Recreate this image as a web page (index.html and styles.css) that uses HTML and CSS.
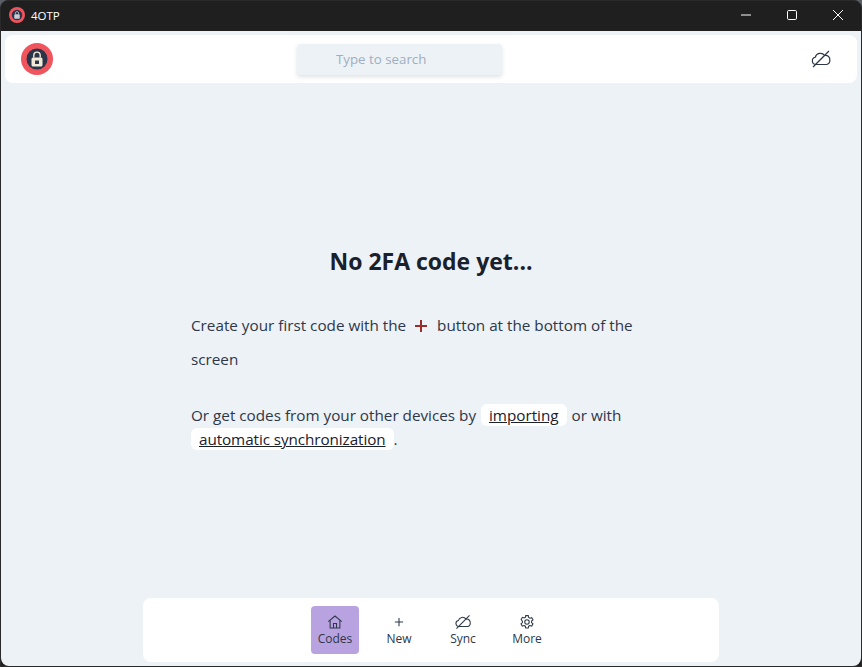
FILE: index.html
```html
<!DOCTYPE html>
<html lang="en">
<head>
  <meta charset="UTF-8" />
  <title>4OTP</title>
  <link rel="stylesheet" href="styles.css">
</head>
<body>
  <div class="window">
    <div class="titlebar">
      <svg class="title-logo" viewBox="0 0 32 32">
        <circle cx="16" cy="16" r="16" fill="#f0545c"/>
        <circle cx="16" cy="16" r="10.500" fill="#2b3448"/>
        <rect x="10.500" y="14.500" width="11" height="9" rx="1.500" fill="#c9cdd6"/>
        <path d="M12.800 14.500v-2.200a3.200 3.200 0 0 1 6.400 0v2.200" fill="none" stroke="#c9cdd6" stroke-width="1.500"/>
      </svg>
      <span class="title-text">4OTP</span>
      <div class="window-buttons">
        <svg viewBox="0 0 12 12"><path d="M1 6h10" /></svg>
        <svg viewBox="0 0 12 12"><rect x="1.500" y="1.500" width="9" height="9" rx="1.200"/></svg>
        <svg viewBox="0 0 12 12"><path d="M1 1l10 10M11 1L1 11"/></svg>
      </div>
    </div>

    <div class="page">
      <div class="header">
        <svg class="logo" viewBox="0 0 32 32">
          <circle cx="16" cy="16" r="16" fill="#f0545c"/>
          <circle cx="16" cy="16" r="10.500" fill="#2b3448"/>
          <rect x="10.500" y="14.500" width="11" height="9" rx="1.500" fill="#f2ead8"/>
          <rect x="14" y="17.500" width="4" height="3.500" fill="#2b3448"/>
          <path d="M12.800 14.500v-2.200a3.200 3.200 0 0 1 6.400 0v2.200" fill="none" stroke="#f2ead8" stroke-width="1.400"/>
        </svg>
        <input class="search" type="text" placeholder="Type to search" />
        <svg class="sync-icon" viewBox="0 0 24 24">
          <path d="M6.500 18a4 4 0 0 1-.8-7.900A5.800 5.800 0 0 1 16 8.200a4.600 4.600 0 0 1 5.600 5.300A4 4 0 0 1 18 18z"/>
          <path d="M20.700 3.300L3.300 20.700"/>
        </svg>
      </div>

      <div class="main-content">
        <h1>No 2FA code yet...</h1>
        <div class="message">
          <p class="first-line">Create your first code with the <svg class="plus" viewBox="0 0 12 12"><path d="M6 0v12M0 6h12"/></svg> button at the bottom of the screen</p>
          <p class="second-line">Or get codes from your other devices by <a href="#">importing</a> or with <a class="tight" href="#">automatic synchronization</a> .</p>
        </div>
      </div>

      <div class="nav">
        <div class="nav-item active">
          <svg viewBox="0 0 24 24"><path d="M3 11.500L12 4l9 7.500"/><path d="M5.500 9.500V20h13V9.500"/><path d="M10 20v-6h4v6"/></svg>
          <span>Codes</span>
        </div>
        <div class="nav-item">
          <svg viewBox="0 0 24 24"><path d="M12 6.500v11M6.500 12h11"/></svg>
          <span>New</span>
        </div>
        <div class="nav-item">
          <svg viewBox="0 0 24 24">
            <path d="M6.500 18a4 4 0 0 1-.8-7.900A5.800 5.800 0 0 1 16 8.200a4.600 4.600 0 0 1 5.600 5.300A4 4 0 0 1 18 18z"/>
            <path d="M20.700 3.300L3.300 20.700"/>
          </svg>
          <span>Sync</span>
        </div>
        <div class="nav-item">
          <svg viewBox="0 0 24 24">
            <path d="M10.300 3.500h3.400l.5 2.500 1.700 1 2.400-.8 1.700 2.900-1.900 1.700v2l1.900 1.700-1.700 2.900-2.400-.8-1.700 1-.5 2.500h-3.400l-.5-2.500-1.700-1-2.400.8-1.700-2.900 1.900-1.700v-2L4.200 8.600l1.700-2.900 2.400.8 1.700-1z"/>
            <circle cx="12" cy="12" r="3"/>
          </svg>
          <span>More</span>
        </div>
      </div>
    </div>
  </div>
</body>
</html>
```

FILE: styles.css
```css
* {
  box-sizing: border-box;
  margin: 0;
  padding: 0;
}

html,
body {
  height: 100%;
}

body {
  font-family: "Open Sans", "Noto Sans", sans-serif;
  background-color: #5a5f66;
  overflow: hidden;
}

.window {
  display: flex;
  flex-direction: column;
  height: 667px;
  background-color: #1f1f1f;
  border: 1px solid #2a2a2a;
  border-radius: 8px 8px 0 0;
  overflow: hidden;
}

.titlebar {
  display: flex;
  align-items: center;
  height: 30px;
  padding-left: 8px;
  padding-bottom: 2px;
  color: white;
  flex-shrink: 0;
}

.title-logo {
  width: 16px;
  height: 16px;
  margin-right: 6px;
}

.title-text {
  font-size: 11.500px;
}

.window-buttons {
  display: flex;
  margin-left: auto;
}

.window-buttons svg {
  width: 46px;
  height: 12px;
  fill: none;
  stroke: white;
  stroke-width: 1;
}

.page {
  flex: 1;
  display: flex;
  flex-direction: column;
  background-color: #edf2f7;
  padding: 4px;
  border-radius: 0 0 8px 8px;
  min-height: 0;
}

.header {
  display: flex;
  align-items: center;
  height: 48px;
  padding-left: 16px;
  padding-right: 25px;
  background-color: white;
  border-radius: 8px;
  flex-shrink: 0;
}

.logo {
  width: 32px;
  height: 32px;
}

.search {
  width: 205px;
  height: 31px;
  margin-left: 244px;
  padding-left: 39px;
  font-family: inherit;
  font-size: 13.300px;
  color: #2d3748;
  background-color: #edf2f7;
  border: none;
  border-radius: 4px;
  box-shadow: 0 2px 4px rgba(45, 55, 72, 0.15);
}

.search::placeholder {
  color: #a0aec0;
  opacity: 1;
}

.sync-icon {
  width: 22px;
  height: 22px;
  margin-left: auto;
  fill: none;
  stroke: #2d3748;
  stroke-width: 1.300;
}

.main-content {
  flex: 1;
  display: flex;
  flex-direction: column;
  align-items: center;
  padding-top: 162px;
  min-height: 0;
}

h1 {
  font-size: 23px;
  font-weight: 700;
  line-height: 32px;
  color: #1a202c;
}

.message {
  width: 480px;
  margin-top: 31px;
  font-size: 15.250px;
  color: #2d3748;
}

.first-line {
  line-height: 34px;
}

.plus {
  width: 12px;
  height: 12px;
  margin: 0 6px 0 5px;
  vertical-align: -1px;
  fill: none;
  stroke: #9b2c2c;
  stroke-width: 2;
}

.second-line {
  margin-top: 27px;
  line-height: 24px;
}

.second-line a {
  padding: 1px 8px;
  margin: 0 1px;
  color: #1a202c;
  background-color: white;
  border-radius: 6px;
}

.second-line a.tight {
  margin: 0 -4px 0 0;
  letter-spacing: -0.080px;
}

.nav {
  display: flex;
  justify-content: center;
  gap: 16px;
  width: 576px;
  height: 64px;
  margin: 0 auto;
  padding-top: 8px;
  background-color: white;
  border-radius: 8px;
  flex-shrink: 0;
}

.nav-item {
  display: flex;
  flex-direction: column;
  align-items: center;
  width: 48px;
  height: 48px;
  padding-top: 7px;
  border-radius: 4px;
  font-size: 12px;
  line-height: 14px;
  color: #2d3748;
}

.nav-item svg {
  width: 18px;
  height: 18px;
  margin-bottom: 1px;
  fill: none;
  stroke: #2d3748;
  stroke-width: 1.400;
}

.nav-item.active {
  background-color: #b9a2e0;
}
```
